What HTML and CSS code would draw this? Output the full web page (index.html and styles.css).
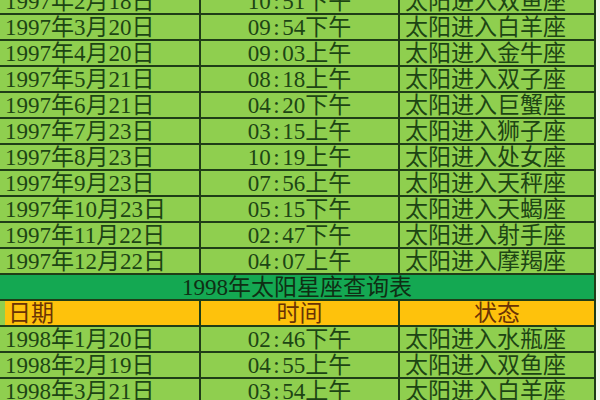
FILE: index.html
```html
<!DOCTYPE html>
<html lang="zh-CN">
<head>
<meta charset="utf-8">
<title>太阳星座查询表</title>
<link rel="stylesheet" href="styles.css">
</head>
<body>
<table class="sheet">
  <colgroup><col class="c1"><col class="c2"><col class="c3"></colgroup>
  <tbody>
    <tr><td class="d">1997年2月18日</td><td class="t">10<span class="c">:</span>51下午</td><td class="s">太阳进入双鱼座</td></tr>
    <tr><td class="d">1997年3月20日</td><td class="t">09<span class="c">:</span>54下午</td><td class="s">太阳进入白羊座</td></tr>
    <tr><td class="d">1997年4月20日</td><td class="t">09<span class="c">:</span>03上午</td><td class="s">太阳进入金牛座</td></tr>
    <tr><td class="d">1997年5月21日</td><td class="t">08<span class="c">:</span>18上午</td><td class="s">太阳进入双子座</td></tr>
    <tr><td class="d">1997年6月21日</td><td class="t">04<span class="c">:</span>20下午</td><td class="s">太阳进入巨蟹座</td></tr>
    <tr><td class="d">1997年7月23日</td><td class="t">03<span class="c">:</span>15上午</td><td class="s">太阳进入狮子座</td></tr>
    <tr><td class="d">1997年8月23日</td><td class="t">10<span class="c">:</span>19上午</td><td class="s">太阳进入处女座</td></tr>
    <tr><td class="d">1997年9月23日</td><td class="t">07<span class="c">:</span>56上午</td><td class="s">太阳进入天秤座</td></tr>
    <tr><td class="d">1997年10月23日</td><td class="t">05<span class="c">:</span>15下午</td><td class="s">太阳进入天蝎座</td></tr>
    <tr><td class="d">1997年11月22日</td><td class="t">02<span class="c">:</span>47下午</td><td class="s">太阳进入射手座</td></tr>
    <tr><td class="d">1997年12月22日</td><td class="t">04<span class="c">:</span>07上午</td><td class="s">太阳进入摩羯座</td></tr>
    <tr class="title"><td colspan="3">1998年太阳星座查询表</td></tr>
    <tr class="head"><td class="d">日期</td><td class="t">时间</td><td class="t">状态</td></tr>
    <tr><td class="d">1998年1月20日</td><td class="t">02<span class="c">:</span>46下午</td><td class="s">太阳进入水瓶座</td></tr>
    <tr><td class="d">1998年2月19日</td><td class="t">04<span class="c">:</span>55上午</td><td class="s">太阳进入双鱼座</td></tr>
    <tr><td class="d">1998年3月21日</td><td class="t">03<span class="c">:</span>54上午</td><td class="s">太阳进入白羊座</td></tr>
  </tbody>
</table>
</body>
</html>
```

FILE: styles.css
```css
html, body {
  margin: 0;
  padding: 0;
  background: #f4f8ef;
  overflow: hidden;
}

.sheet {
  margin: -13px 0 0 -2px;
  border-collapse: collapse;
  table-layout: fixed;
  width: 596px;
  font-family: "Liberation Serif", "Noto Sans CJK SC", serif;
  font-size: 23px;
  color: #1d4514;
  background: #8fcf4f;
}

.c1 { width: 201px; }
.c2 { width: 199px; }
.c3 { width: 196px; }

.sheet td {
  height: 22px;
  padding: 2px 0 0 0;
  line-height: 22px;
  border: 2px solid #1f3d17;
  white-space: nowrap;
  overflow: hidden;
}

.sheet td.d { padding-left: 5px; }
.sheet td.t { text-align: center; }
.sheet td.s { padding-left: 5px; }

.c {
  display: inline-block;
  width: 0.5em;
  text-align: center;
}

.title td {
  background: #14a852;
  color: #0f2f14;
  text-align: center;
}

.head td {
  background: #fec20c;
  color: #6a3305;
}

.head td.d {
  padding-left: 8px;
  box-shadow: inset 5px 0 0 #8fcf4f;
}
```
